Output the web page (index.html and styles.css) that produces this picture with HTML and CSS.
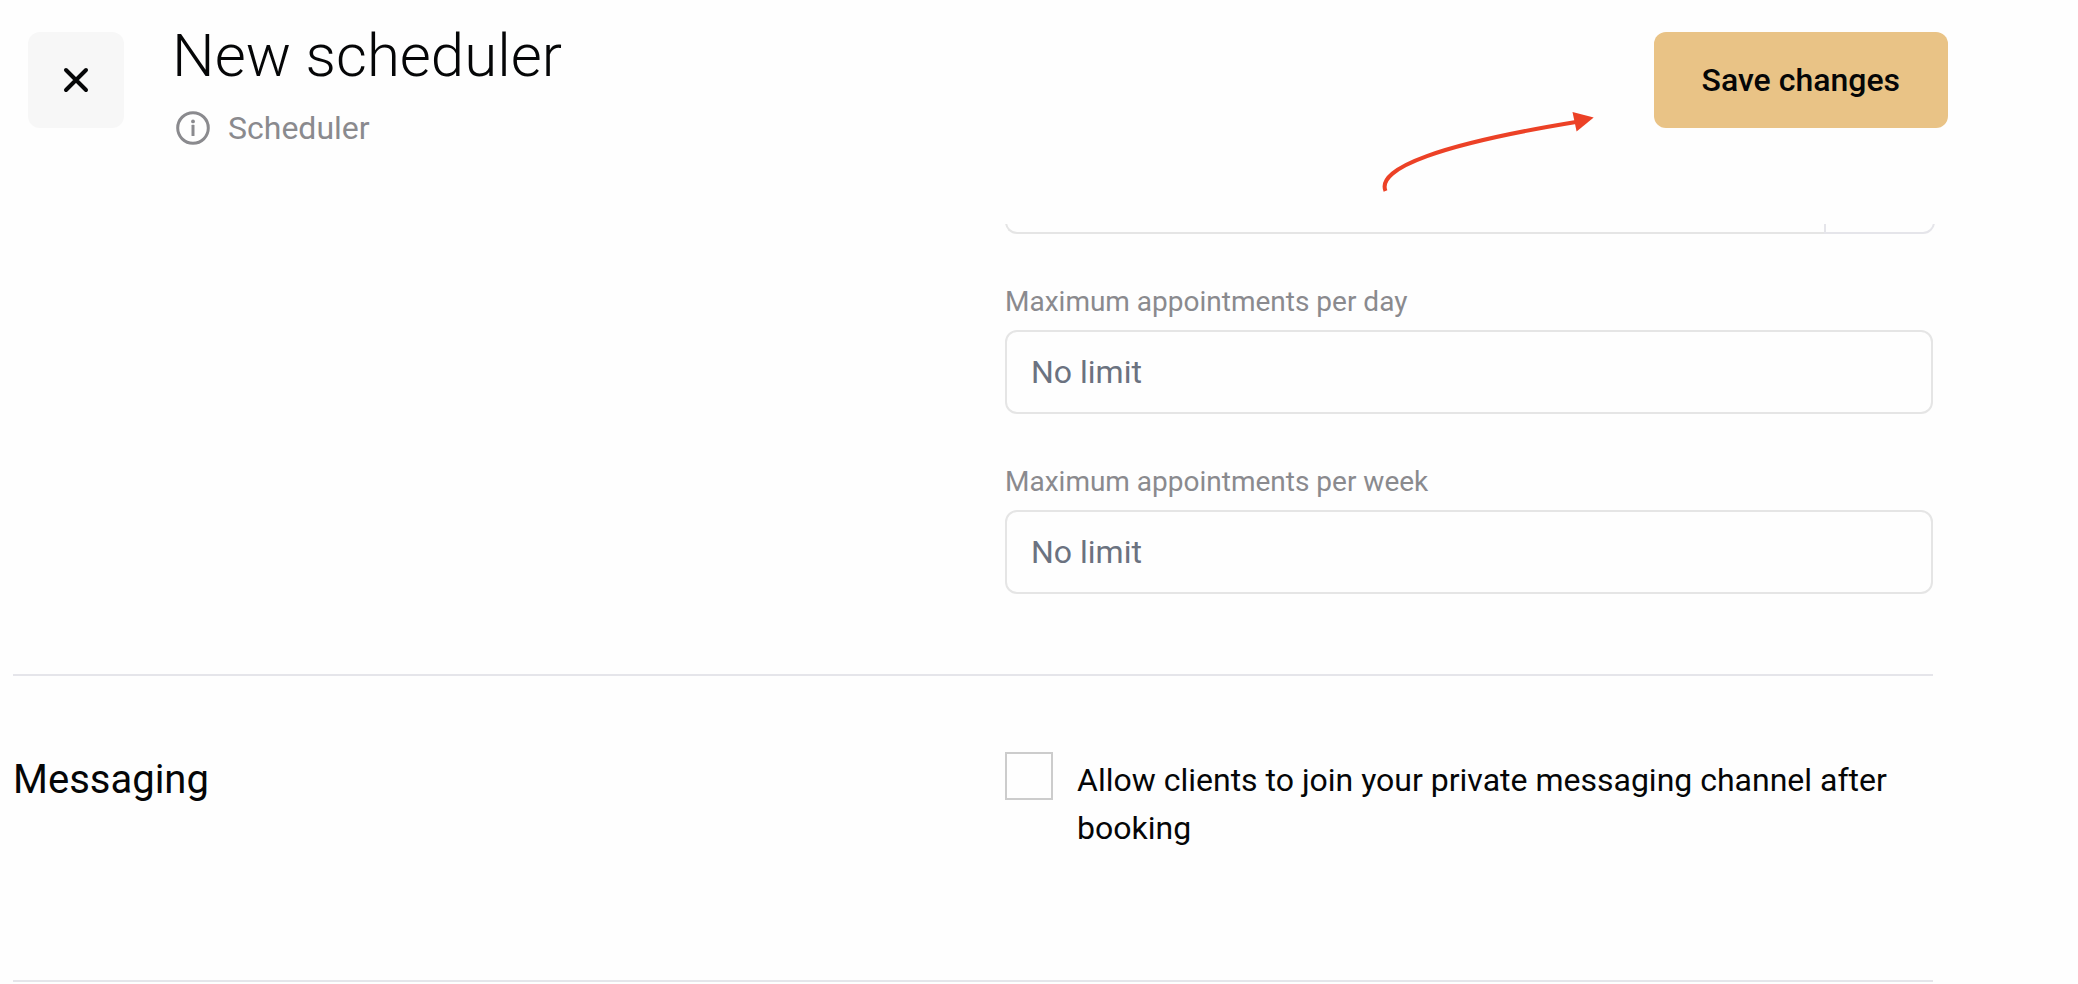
FILE: index.html
```
<!DOCTYPE html>
<html lang="en">
<head>
<meta charset="utf-8">
<meta name="viewport" content="width=device-width, initial-scale=1">
<title>New scheduler</title>
<link rel="stylesheet" href="styles.css">
</head>
<body>
<header class="topbar">
  <button class="close" type="button" aria-label="Close">
    <svg class="close-icon" viewBox="0 0 32 32" aria-hidden="true"><path d="M6 6L26 26M26 6L6 26"/></svg>
  </button>
  <div class="heading">
    <h1 class="title">New scheduler</h1>
    <p class="subtitle">
      <svg class="info-icon" viewBox="0 0 40 40" aria-hidden="true">
        <circle class="ring" cx="21" cy="20" r="15.300"/>
        <circle cx="21" cy="13.400" r="1.900"/>
        <rect x="19.500" y="16.800" width="3" height="11.200" rx="0.600"/>
      </svg>
      Scheduler
    </p>
  </div>
  <div class="actions">
    <button class="save" type="button">Save changes</button>
    <svg class="arrow" viewBox="0 0 216 84" aria-hidden="true">
      <path class="shaft" d="M5.500 81C-4 58 62 34 196 12"/>
      <path class="head" d="M192.500 2L213.700 7.500L196.600 21.500Z"/>
    </svg>
  </div>
</header>
<main class="content">
  <section class="section limits">
    <div class="fields">
      <div class="split">
        <input class="split-value" type="text" aria-label="Duration">
        <button class="split-unit" type="button" aria-label="Duration unit"></button>
      </div>
      <div class="field">
        <label class="label" for="per-day">Maximum appointments per day</label>
        <input class="input" id="per-day" type="text" placeholder="No limit">
      </div>
      <div class="field">
        <label class="label" for="per-week">Maximum appointments per week</label>
        <input class="input" id="per-week" type="text" placeholder="No limit">
      </div>
    </div>
  </section>
  <section class="section messaging">
    <h2 class="section-title">Messaging</h2>
    <div class="option">
      <input class="check" id="allow" type="checkbox">
      <label class="option-text" for="allow">Allow clients to join your private messaging channel after booking</label>
    </div>
  </section>
</main>
</body>
</html>
```
FILE: styles.css
```
* { box-sizing: border-box; }

body {
  margin: 0;
  background: #fefefe;
  color: #050607;
  font-family: Roboto, "Liberation Sans", sans-serif;
  font-size: 32px;
  line-height: 48px;
}

button, input { font: inherit; color: inherit; }

.topbar {
  display: flex;
  align-items: flex-start;
  gap: 48px;
  min-height: 224px;
  padding: 32px 130px 0 28px;
}

.close {
  display: grid;
  place-items: center;
  width: 96px;
  height: 96px;
  padding: 0;
  border: 0;
  border-radius: 12px;
  background: #f7f7f7;
}

.close-icon {
  width: 32px;
  height: 32px;
  fill: none;
  stroke: currentColor;
  stroke-width: 4;
  stroke-linecap: round;
}

.heading { flex: 1; }

.title {
  margin: 0 0 24px;
  font-size: 60px;
  font-weight: 300;
}

.subtitle {
  display: flex;
  align-items: center;
  gap: 16px;
  margin: 0;
  color: #8a8a8e;
}

.info-icon {
  width: 40px;
  height: 40px;
  fill: currentColor;
}

.info-icon .ring {
  fill: none;
  stroke: currentColor;
  stroke-width: 3;
}

.actions { position: relative; }

.save {
  height: 96px;
  padding: 0 48px;
  border: 0;
  border-radius: 12px;
  background: #e9c386;
  font-weight: 500;
}

.arrow {
  position: absolute;
  top: 78px;
  right: calc(100% + 58px);
  width: 216px;
  height: 84px;
}

.shaft {
  fill: none;
  stroke: #ec4126;
  stroke-width: 4;
}

.head { fill: #ec4126; }

.content {
  overflow: hidden;
  padding: 0 145px 0 13px;
}

.section {
  display: grid;
  grid-template-columns: 31fr 29fr;
  border-bottom: 2px solid #e5e5ea;
}

.limits { padding-bottom: 80px; }

.messaging { padding: 76px 0 128px; }

/* The first field is scrolled partly under the top bar. */
.fields {
  grid-column: 2;
  display: flex;
  flex-direction: column;
  gap: 48px;
  margin-top: -74px;
}

.split {
  display: flex;
  height: 84px;
  margin-right: -2px;
}

.split-value {
  flex: 1;
  min-width: 0;
  border: 2px solid #e5e5e5;
  border-right: 0;
  border-radius: 12px 0 0 12px;
  background: transparent;
}

.split-unit {
  width: 111px;
  border: 2px solid #e5e5ea;
  border-radius: 0 12px 12px 0;
  background: transparent;
}

.field {
  display: flex;
  flex-direction: column;
  gap: 8px;
}

.label {
  color: #8a8a8e;
  font-size: 28px;
  line-height: 40px;
}

.input {
  width: 100%;
  height: 84px;
  padding: 0 24px;
  border: 2px solid #e5e5e5;
  border-radius: 12px;
  background: transparent;
}

.input::placeholder {
  color: #6b7280;
  opacity: 1;
}

.section-title {
  margin: 0;
  padding-top: 4px;
  font-size: 40px;
  font-weight: 400;
}

.option {
  display: flex;
  align-items: flex-start;
  gap: 24px;
}

.check {
  flex: none;
  appearance: none;
  width: 48px;
  height: 48px;
  margin: 0;
  border: 2px solid #cccccc;
}

.option-text { padding-top: 4px; }
```
